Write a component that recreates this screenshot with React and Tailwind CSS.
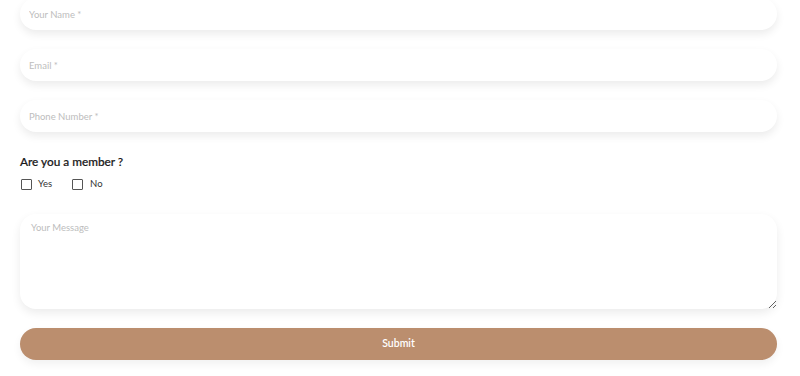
export default function App() {
  const font = { fontFamily: "Lato, 'Open Sans', sans-serif" };
  const inputCls =
    "block w-full h-[32px] rounded-[16px] bg-white px-[9px] text-[9.5px] text-gray-700 placeholder:text-[#bdbdbd] outline-none shadow-[0_4px_8px_rgba(0,0,0,0.08)]";
  return (
    <div className="w-[800px] h-[376px] overflow-hidden bg-white" style={font}>
      <div className="px-[20px] pr-[23px] flex flex-col -mt-[2px]">
        <input className={inputCls} placeholder="Your Name *" style={font} />
        <input className={inputCls + " mt-[19px]"} placeholder="Email *" style={font} />
        <input className={inputCls + " mt-[19px]"} placeholder="Phone Number *" style={font} />
        <div className="mt-[21px] text-[11.8px] font-medium text-[#1a1a1a] leading-[17px] [-webkit-text-stroke:0.2px_#1a1a1a]">Are you a member ?</div>
        <div className="mt-[8px] flex items-center text-[9.5px] text-[#333] leading-[12px]">
          <span className="w-[11px] h-[11px] border border-[#555] rounded-[1px] ml-[1px]"></span>
          <span className="ml-[6px]">Yes</span>
          <span className="w-[11px] h-[11px] border border-[#555] rounded-[1px] ml-[20px]"></span>
          <span className="ml-[7px]">No</span>
        </div>
        <textarea
          className="mt-[24px] block w-full h-[95px] rounded-[16px] bg-white px-[11px] py-[7px] text-[9.5px] text-gray-700 placeholder:text-[#bdbdbd] outline-none shadow-[0_4px_10px_rgba(0,0,0,0.08)]"
          placeholder="Your Message"
          style={font}
        />
        <button
          className="mt-[19px] h-[32px] w-full rounded-full bg-[#bb8e6e] text-white text-[10.5px] font-semibold shadow-[0_4px_8px_rgba(0,0,0,0.06)]"
          style={font}
        >
          Submit
        </button>
      </div>
    </div>
  );
}
